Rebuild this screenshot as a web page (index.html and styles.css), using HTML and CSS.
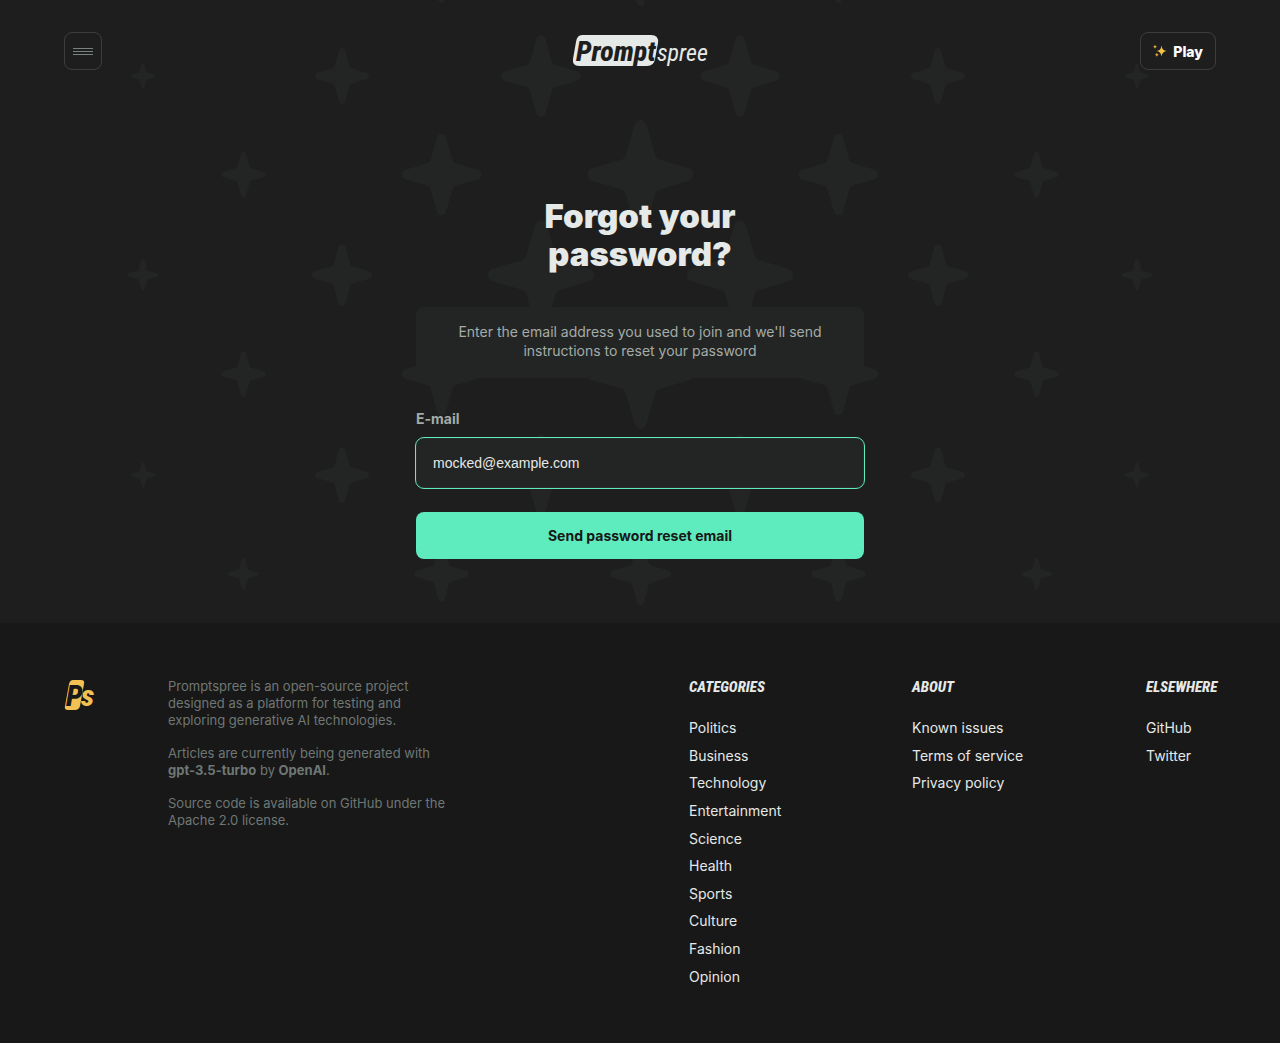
FILE: index.html
```html
<!DOCTYPE html>
<html lang="en">
<head>
<meta charset="utf-8">
<meta name="viewport" content="width=device-width, initial-scale=1">
<title>Forgot your password? – Promptspree</title>
<link rel="stylesheet" href="styles.css">
</head>
<body>
<div class="page">
  <svg class="stars" width="1280" height="623" viewBox="0 0 1280 623" aria-hidden="true">
    <defs>
      <path id="star" d="M0 -54.500C3.500 -54.500 5.500 -52 6.300 -49L14.500 -19.500Q15.500 -16 18.500 -15L48 -6.500C51 -5.500 53 -3.500 53 0C53 3.500 51 5.500 48 6.500L18.500 15Q15.500 16 14.500 19.500L6.300 49C5.500 52 3.500 54.500 0 54.500C-3.500 54.500 -5.500 52 -6.300 49L-14.500 19.500Q-15.500 16 -18.500 15L-48 6.500C-51 5.500 -53 3.500 -53 0C-53 -3.500 -51 -5.500 -48 -6.500L-18.500 -15Q-15.500 -16 -14.500 -19.500L-6.300 -49C-5.500 -52 -3.500 -54.500 0 -54.500Z"/>
      <g id="row-a">
        <use href="#star" transform="translate(143) scale(.23)"/><use href="#star" transform="translate(342) scale(.51)"/><use href="#star" transform="translate(541) scale(.75)"/><use href="#star" transform="translate(740) scale(.75)"/><use href="#star" transform="translate(938) scale(.51)"/><use href="#star" transform="translate(1137) scale(.23)"/>
      </g>
      <g id="row-b">
        <use href="#star" transform="translate(243.500) scale(.42)"/><use href="#star" transform="translate(441.500) scale(.75)"/><use href="#star" transform="translate(640.500)"/><use href="#star" transform="translate(838.500) scale(.75)"/><use href="#star" transform="translate(1036.500) scale(.42)"/>
      </g>
      <g id="row-c">
        <use href="#star" transform="translate(143) scale(.29)"/><use href="#star" transform="translate(342) scale(.57)"/><use href="#star" transform="translate(541)"/><use href="#star" transform="translate(740)"/><use href="#star" transform="translate(938) scale(.57)"/><use href="#star" transform="translate(1137) scale(.29)"/>
      </g>
      <g id="row-d">
        <use href="#star" transform="translate(243.500) scale(.29)"/><use href="#star" transform="translate(441.500) scale(.51)"/><use href="#star" transform="translate(640.500) scale(.57)"/><use href="#star" transform="translate(838.500) scale(.51)"/><use href="#star" transform="translate(1036.500) scale(.29)"/>
      </g>
    </defs>
    <use href="#row-d" y="-25"/>
    <use href="#row-a" y="76"/>
    <use href="#row-b" y="174.500"/>
    <use href="#row-c" y="275"/>
    <use href="#row-b" y="374"/>
    <use href="#row-a" y="475"/>
    <use href="#row-d" y="574"/>
  </svg>

  <header class="header">
    <div class="header-side">
      <button class="icon-button" type="button" aria-label="Menu">
        <svg width="20" height="7" viewBox="0 0 20 7" aria-hidden="true"><path d="M0 .5h20M0 3.500h20M0 6.500h20" stroke="#7a827f"/></svg>
      </button>
    </div>
    <a class="logo" href="#" aria-label="Promptspree">
      <svg width="136" height="32" viewBox="0 0 136 32">
        <path d="M10 0H79Q87 0 86 8L83 24Q82 31 75 31H7Q0 31 1 24L4 7Q5 0 10 0Z" fill="#e5e9e7"/>
        <text class="logo-strong" x="4" y="26">Prompt</text>
        <text class="logo-light" x="85" y="26">spree</text>
      </svg>
    </a>
    <div class="header-side header-end">
      <a class="play-button" href="#">
        <svg width="14" height="14" viewBox="0 0 14 14" aria-hidden="true">
          <path d="M8.500 1.500Q9 6.500 13.800 7Q9 7.500 8.500 12.500Q8 7.500 3.600 7Q8 6.500 8.500 1.500Z" fill="#f6c244"/>
          <path d="M2 .8Q2.300 2.400 4 2.800Q2.300 3.200 2 4.800Q1.600 3.200 .2 2.800Q1.600 2.400 2 .8Z" fill="#e9a63a"/>
          <path d="M3.800 8.800Q4.100 10.400 5.800 10.800Q4.100 11.200 3.800 12.800Q3.400 11.200 2 10.800Q3.400 10.400 3.800 8.800Z" fill="#e9a63a"/>
        </svg>
        <span>Play</span>
      </a>
    </div>
  </header>

  <main class="main">
    <h1 class="title">Forgot your password?</h1>
    <form class="form">
      <p class="notice">Enter the email address you used to join and we'll send instructions to reset your password</p>
      <label class="label" for="email">E-mail</label>
      <input class="input" id="email" type="email" value="mocked@example.com">
      <button class="submit" type="submit">Send password reset email</button>
    </form>
  </main>
</div>

<footer class="footer">
  <a class="mark" href="#" aria-label="Promptspree">
    <svg width="31" height="30" viewBox="0 0 31 30">
      <path d="M9 0H17Q21 0 20 4L16 26Q15 30 11 30H4Q0 30 1 26L5 4Q6 0 9 0Z" fill="#f2c053"/>
      <text class="mark-p" x="2" y="26">P</text>
      <text class="mark-s" x="17" y="26">s</text>
    </svg>
  </a>
  <div class="about">
    <p>Promptspree is an open-source project designed as a platform for testing and exploring generative AI technologies.</p>
    <p>Articles are currently being generated with <strong>gpt-3.5-turbo</strong> by <strong>OpenAI</strong>.</p>
    <p>Source code is available on GitHub under the Apache 2.0 license.</p>
  </div>
  <nav class="links">
    <section>
      <h2>Categories</h2>
      <ul>
        <li><a href="#">Politics</a></li>
        <li><a href="#">Business</a></li>
        <li><a href="#">Technology</a></li>
        <li><a href="#">Entertainment</a></li>
        <li><a href="#">Science</a></li>
        <li><a href="#">Health</a></li>
        <li><a href="#">Sports</a></li>
        <li><a href="#">Culture</a></li>
        <li><a href="#">Fashion</a></li>
        <li><a href="#">Opinion</a></li>
      </ul>
    </section>
    <section>
      <h2>About</h2>
      <ul>
        <li><a href="#">Known issues</a></li>
        <li><a href="#">Terms of service</a></li>
        <li><a href="#">Privacy policy</a></li>
      </ul>
    </section>
    <section>
      <h2>Elsewhere</h2>
      <ul>
        <li><a href="#">GitHub</a></li>
        <li><a href="#">Twitter</a></li>
      </ul>
    </section>
  </nav>
</footer>
</body>
</html>
```

FILE: styles.css
```css
*,
*::before,
*::after {
  box-sizing: border-box;
}

body {
  margin: 0;
  min-height: 100vh;
  display: flex;
  flex-direction: column;
  background: #181818;
  color: #e5e9e7;
  font-family: Inter, "Liberation Sans", sans-serif;
  font-size: 14px;
  line-height: 19px;
}

h1, h2, p, ul {
  margin: 0;
  padding: 0;
}

a {
  color: inherit;
  text-decoration: none;
}

.page {
  position: relative;
  overflow: hidden;
  padding-bottom: 64px;
  background: #1e1e1e;
}

/* decorative star field behind the header and the form */
.stars {
  position: absolute;
  top: 0;
  left: 50%;
  transform: translateX(-50%);
  fill: #232524;
}

.header {
  position: relative;
  display: flex;
  align-items: center;
  padding: 32px 64px;
}

.header-side {
  flex: 1;
  display: flex;
}

.header-end {
  justify-content: flex-end;
}

.icon-button,
.play-button {
  display: flex;
  align-items: center;
  justify-content: center;
  height: 38px;
  border: 1px solid #3b3e3d;
  border-radius: 8px;
  background: #1e1e1e;
}

.icon-button {
  width: 38px;
  padding: 0;
}

.play-button {
  gap: 6px;
  padding: 0 12px;
  color: #fff;
  font-weight: 800;
}

.logo,
.mark {
  display: block;
}

.logo svg,
.mark svg {
  display: block;
  overflow: visible;
}

.logo text,
.mark text {
  font-family: "Roboto Condensed", "Liberation Sans Narrow", "Liberation Sans", sans-serif;
  font-style: italic;
}

.logo-strong {
  fill: #1e1e1e;
  font-size: 28px;
  font-weight: 800;
}

.logo-light {
  fill: #e5e9e7;
  font-size: 24px;
}

.mark-p {
  fill: #181818;
  font-size: 30px;
  font-weight: 800;
}

.mark-s {
  fill: #f2c053;
  font-size: 30px;
  font-weight: 800;
}

.main {
  position: relative;
  max-width: 448px;
  margin: 0 auto;
  padding-top: 95px;
}

.title {
  max-width: 256px;
  margin: 0 auto 34px;
  font-size: 33px;
  line-height: 38px;
  font-weight: 900;
  text-align: center;
}

.form {
  display: flex;
  flex-direction: column;
}

.notice {
  margin-bottom: 31px;
  padding: 15px 32px 18px;
  border-radius: 8px;
  background: #232524;
  color: #a3aca8;
  text-align: center;
}

.label {
  margin-bottom: 10px;
  color: #a3aca8;
  font-weight: 700;
}

.input {
  height: 50px;
  margin-bottom: 24px;
  padding: 0 16px;
  border: 1px solid #2b2e2d;
  border-radius: 8px;
  outline: 1px solid #5eebbd;
  background: #232524;
  color: #e5e9e7;
  font: 14px "Liberation Sans", Arial, sans-serif;
}

.submit {
  height: 47px;
  border: 0;
  border-radius: 8px;
  background: #5eebbd;
  color: #181818;
  font: 700 14px Inter, "Liberation Sans", sans-serif;
}

.footer {
  flex: 1;
  display: flex;
  align-items: flex-start;
  padding: 55px 64px 48px;
}

.mark {
  width: 104px;
  padding-top: 2px;
}

.about {
  display: grid;
  gap: 16px;
  width: 288px;
  color: #6f7774;
  font-size: 13px;
  line-height: 17px;
}

.links {
  display: grid;
  grid-template-columns: 95px 106px 70px;
  gap: 128px;
  margin-left: auto;
}

.links h2 {
  margin-bottom: 18px;
  font: italic 800 15px/18px "Roboto Condensed", "Liberation Sans Narrow", "Liberation Sans", sans-serif;
  text-transform: uppercase;
}

/* every list shares the ten-row rhythm of the longest one */
.links ul {
  display: grid;
  grid-template-rows: repeat(10, 1fr);
  align-items: center;
  min-height: 276px;
  list-style: none;
  white-space: nowrap;
}
```
